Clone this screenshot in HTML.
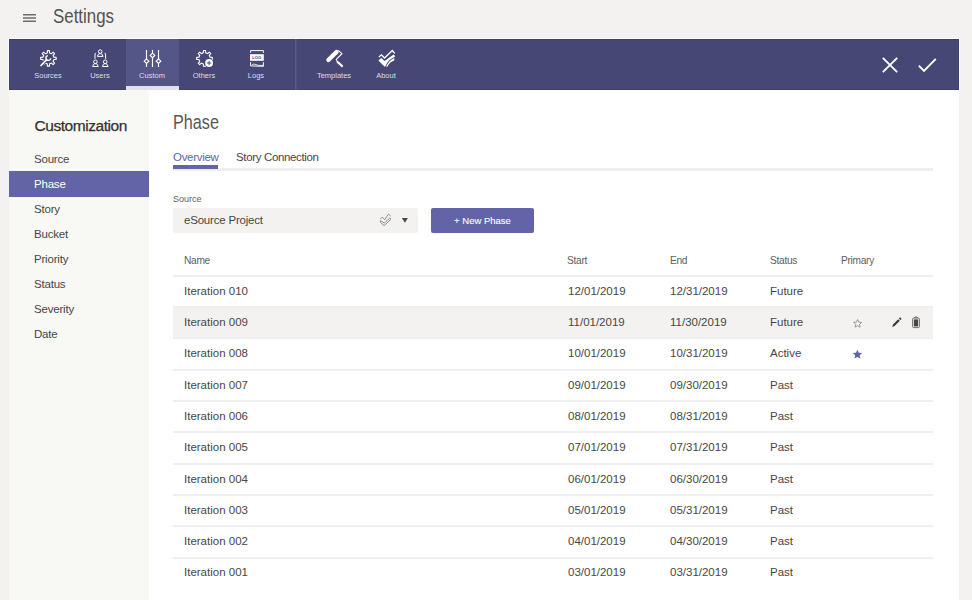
<!DOCTYPE html>
<html><head><meta charset="utf-8">
<style>
*{margin:0;padding:0;box-sizing:border-box}
html,body{width:972px;height:600px;overflow:hidden;background:#f3f2f1;font-family:"Liberation Sans",sans-serif;position:relative}
.a{position:absolute;white-space:nowrap}
.tb{left:9px;top:39px;width:950px;height:51px;background:#464775;box-shadow:0 -1px 0 0 #fafaf8,-1px 0 0 0 #fafaf8,1px 0 0 0 #fafaf8,inset 0 0 0 1px #404172}
.act{left:126px;top:39px;width:53px;height:51px;background:#555688}
.actbar{left:126px;top:86px;width:53px;height:4px;background:#e1e1e6}
.sep{left:295px;top:39px;width:2px;height:51px;background:linear-gradient(90deg,#585a82 50%,#4f5081 50%)}
.lbl{font-size:7.5px;color:#dcdcf0;top:71px;text-align:center;width:52px}
.side{left:9px;top:90px;width:140px;height:510px;background:#f8f8f5}
.main{left:149px;top:90px;width:810px;height:510px;background:#fff}
.si{left:34px;font-size:11.5px;color:#484644;margin-top:-0.5px;letter-spacing:-0.2px}
.hd{font-size:10.2px;color:#605e5c;letter-spacing:-0.3px}
.td{font-size:11.5px;color:#484644}
.hr{left:173px;width:760px;height:1px;background:#f0efee}
</style></head><body>
<!-- hamburger -->
<svg class="a" style="left:20px;top:10px" width="20" height="16" viewBox="0 0 20 16"><path d="M3,4.7 H16 M3,8 H16 M3,11.2 H16" stroke="#6e6d6c" stroke-width="1.6"/></svg>
<div class="a" style="left:53px;top:4.8px;font-size:19.5px;color:#55534f;transform:scaleX(0.865);transform-origin:0 0">Settings</div>

<div class="a tb"></div>
<div class="a act"></div>
<div class="a actbar"></div>
<div class="a sep"></div>
<svg class="a" style="left:36px;top:46px" width="24" height="24" viewBox="0 0 24 24" fill="none" stroke="#ffffff">
<path d="M11.25,6.92 L11.37,4.67 L13.43,4.67 L13.55,6.92 L15.47,7.71 L17.14,6.21 L18.59,7.66 L17.09,9.33 L17.88,11.25 L20.13,11.37 L20.13,13.43 L17.88,13.55 L17.09,15.47 L18.59,17.14 L17.14,18.59 L15.47,17.09 L13.55,17.88 L13.43,20.13 L11.37,20.13 L11.25,17.88 L9.33,17.09 L7.66,18.59 L6.21,17.14 L7.71,15.47 L6.92,13.55 L4.67,13.43 L4.67,11.37 L6.92,11.25 L7.71,9.33 L6.21,7.66 L7.66,6.21 L9.33,7.71Z" stroke-width="1.1" stroke-linejoin="round"/>
<path d="M5,19.5 L10.4,13.8" stroke="#464775" stroke-width="3.4" stroke-linecap="round"/>
<path d="M5,19.5 L10.4,13.8" stroke-width="1.7" stroke-linecap="round"/>
<path d="M11.9,9.6 A2.4,2.4 0 1 0 14.7,12.2" stroke-width="1.4"/>
</svg>
<svg class="a" style="left:88px;top:46px" width="24" height="24" viewBox="0 0 24 24" fill="none" stroke="#ffffff" stroke-width="1">
<circle cx="12.2" cy="5.6" r="1.8"/><path d="M9.4,10.4 L10.4,8.2 Q10.8,7.6 12.2,7.6 Q13.6,7.6 14,8.2 L15.1,10.4 Z"/>
<circle cx="7.4" cy="15.8" r="1.8"/><path d="M4.6,20.5 L5.6,18.3 Q6,17.7 7.4,17.7 Q8.8,17.7 9.2,18.3 L10.3,20.5 Z"/>
<circle cx="17.2" cy="15.8" r="1.8"/><path d="M14.4,20.5 L15.4,18.3 Q15.8,17.7 17.2,17.7 Q18.6,17.7 19,18.3 L20.1,20.5 Z"/>
<path d="M7,12.8 V7.8 Q7,7.3 8,7.3"/><path d="M17.6,12.8 V7.8 Q17.6,7.3 16.6,7.3"/>
</svg>
<svg class="a" style="left:140px;top:46px" width="24" height="24" viewBox="0 0 24 24" fill="none" stroke="#ffffff" stroke-width="1.15">
<path d="M6.5,4 V12.9 M6.5,17.5 V21 M12.5,4 V7.1 M12.5,11.7 V21 M18.5,4 V12.9 M18.5,17.5 V21"/>
<path d="M6.5,12.9 L8.8,15.2 L6.5,17.5 L4.2,15.2Z M12.5,7.1 L14.8,9.4 L12.5,11.7 L10.2,9.4Z M18.5,12.9 L20.8,15.2 L18.5,17.5 L16.2,15.2Z"/>
</svg>
<svg class="a" style="left:192px;top:46px" width="24" height="24" viewBox="0 0 24 24" fill="none" stroke="#ffffff">
<path d="M11.33,6.82 L11.46,4.57 L13.54,4.57 L13.67,6.82 L15.62,7.63 L17.30,6.13 L18.77,7.60 L17.27,9.28 L18.08,11.23 L20.33,11.36 L20.33,13.44 L18.08,13.57 L17.27,15.52 L18.77,17.20 L17.30,18.67 L15.62,17.17 L13.67,17.98 L13.54,20.23 L11.46,20.23 L11.33,17.98 L9.38,17.17 L7.70,18.67 L6.23,17.20 L7.73,15.52 L6.92,13.57 L4.67,13.44 L4.67,11.36 L6.92,11.23 L7.73,9.28 L6.23,7.60 L7.70,6.13 L9.38,7.63Z" stroke-width="1.1" stroke-linejoin="round"/>
<circle cx="17.1" cy="17" r="4.7" fill="#464775" stroke="none"/>
<circle cx="17.1" cy="17" r="3.9" fill="#ffffff" stroke="none"/>
<path d="M17.1,14.8 V19.2 M14.9,17 H19.3" stroke="#464775" stroke-width="0.95"/>
</svg>
<svg class="a" style="left:244px;top:46px" width="24" height="24" viewBox="0 0 24 24" fill="none" stroke="#ffffff" stroke-width="1">
<path d="M6.6,6.8 V4.6 H19.4 V6.8"/>
<rect x="6" y="8.2" width="13.8" height="6.6" fill="#ffffff" stroke="none"/>
<text x="12.8" y="13.2" font-family="Liberation Sans" font-size="4.2" font-weight="bold" fill="#464775" stroke="none" text-anchor="middle">LOG</text>
<path d="M6.6,16.2 V19.9 L19.4,20.3 V16.2"/>
<path d="M8,18.6 Q10,17.4 12,18.6 T19,19.4" stroke-width="0.8"/>
</svg>
<svg class="a" style="left:322px;top:46px" width="24" height="24" viewBox="0 0 24 24" fill="none" stroke="#ffffff">
<path d="M6.4,14.0 L14.5,5.9" stroke-width="4.2" stroke-linecap="round"/>
<path d="M16.3,4.4 L19.9,7.7 L14.3,13.3 L14.8,15" stroke-width="1.1" stroke-linejoin="miter"/>
<path d="M15.6,16 L20,20" stroke-width="2.3" stroke-linecap="round"/>
</svg>
<svg class="a" style="left:374px;top:46px" width="24" height="24" viewBox="0 0 24 24" fill="none" stroke="#ffffff">
<path d="M4.8,11.1 L7.5,8.8 L10.5,12 L18.3,4.5 L20.7,7.4" stroke-width="1.3" stroke-linejoin="miter"/>
<path d="M4.4,14.4 L7.3,11.9 L10.6,15 L19.6,8.5 L21,9.9 L20.6,11 Q14.2,13.2 11.4,20.2 L10.7,20.8 Z" fill="#ffffff" stroke="none"/>
<path d="M12.2,20.7 Q14.6,14.6 20.4,12.1 L20.2,14.4 Q15.6,15.8 13.2,21 Z" fill="#ffffff" stroke="none"/>
</svg>
<svg class="a" style="left:878px;top:53px" width="24" height="24" viewBox="0 0 24 24"><path d="M4.8,4.8 L19.2,19.2 M19.2,4.8 L4.8,19.2" stroke="#fff" stroke-width="1.9"/></svg>
<svg class="a" style="left:915px;top:53px" width="24" height="24" viewBox="0 0 24 24"><path d="M3.8,12.6 L9,17.8 L20.8,5.8" fill="none" stroke="#fff" stroke-width="1.9"/></svg>
<div class="a lbl" style="left:22px">Sources</div>
<div class="a lbl" style="left:74px">Users</div>
<div class="a lbl" style="left:126px">Custom</div>
<div class="a lbl" style="left:178px">Others</div>
<div class="a lbl" style="left:230px">Logs</div>
<div class="a lbl" style="left:308px">Templates</div>
<div class="a lbl" style="left:360px">About</div>

<div class="a side"></div>
<div class="a main"></div>
<div class="a" style="left:9px;top:171px;width:140px;height:26px;background:#6264a7"></div>
<div class="a" style="left:34.5px;top:116.5px;font-size:15.5px;color:#323130;-webkit-text-stroke:0.25px #323130;letter-spacing:-0.45px">Customization</div>
<div class="a si" style="top:153px">Source</div>
<div class="a si" style="top:178px;color:#fff">Phase</div>
<div class="a si" style="top:203px">Story</div>
<div class="a si" style="top:228px">Bucket</div>
<div class="a si" style="top:253px">Priority</div>
<div class="a si" style="top:278px">Status</div>
<div class="a si" style="top:303px">Severity</div>
<div class="a si" style="top:328px">Date</div>

<div class="a" style="left:173px;top:109.7px;font-size:20.5px;color:#5a5855;transform:scaleX(0.79);transform-origin:0 0">Phase</div>
<div class="a" style="left:173px;top:151px;font-size:11.5px;color:#6264a7;letter-spacing:-0.3px">Overview</div>
<div class="a" style="left:236px;top:151px;font-size:11.5px;color:#484644;letter-spacing:-0.35px">Story Connection</div>
<div class="a hr" style="top:168px;height:3px;background:#efeeec"></div>
<div class="a" style="left:173px;top:165px;width:45px;height:4px;background:#6264a7"></div>

<div class="a" style="left:173px;top:193.7px;font-size:9px;color:#605e5c">Source</div>
<div class="a" style="left:173px;top:208px;width:245px;height:25px;background:#f3f2f1;border-radius:2px"></div>
<div class="a" style="left:184px;top:214px;font-size:11.5px;color:#484644;letter-spacing:-0.2px">eSource Project</div>
<svg class="a" style="left:378px;top:212px" width="15" height="15" viewBox="0 0 15 15"><path d="M2.3,7.1 L4.3,5.1 L6.7,7.7 L10.5,2.1 L12.8,4.2" fill="none" stroke="#8a8886" stroke-width="0.95"/><path d="M2.5,8.6 L6.3,11 L11.8,6 L13,7.2 L6.1,13.7 L2.3,10.3 Z" fill="none" stroke="#8a8886" stroke-width="0.95" stroke-linejoin="miter"/></svg>
<svg class="a" style="left:400px;top:216px" width="10" height="8" viewBox="0 0 10 8"><path d="M1.9,2.1 L7.9,2.1 L4.9,6.7Z" fill="#484644"/></svg>
<div class="a" style="left:431px;top:208px;width:103px;height:25px;background:#6264a7;border-radius:2px"></div>
<div class="a" style="left:431px;top:215px;width:103px;text-align:center;font-size:9.5px;color:#fff;-webkit-text-stroke:0.1px #fff">+ New Phase</div>

<div class="a hd" style="left:184px;top:255px">Name</div>
<div class="a hd" style="left:567px;top:255px">Start</div>
<div class="a hd" style="left:670px;top:255px">End</div>
<div class="a hd" style="left:770px;top:255px">Status</div>
<div class="a hd" style="left:841px;top:255px">Primary</div>
<div class="a hr" style="top:275px;height:2px"></div>
<div class="a td" style="left:184px;top:285px">Iteration 010</div>
<div class="a td" style="left:568px;top:285px">12/01/2019</div>
<div class="a td" style="left:670px;top:285px">12/31/2019</div>
<div class="a td" style="left:770px;top:285px">Future</div>
<div class="a" style="left:173px;top:306px;width:760px;height:33px;background:#f3f2f1"></div>
<div class="a hr" style="top:306px;height:2px"></div>
<div class="a td" style="left:184px;top:316px">Iteration 009</div>
<div class="a td" style="left:568px;top:316px">11/01/2019</div>
<div class="a td" style="left:670px;top:316px">11/30/2019</div>
<div class="a td" style="left:770px;top:316px">Future</div>
<div class="a hr" style="top:337px;height:2px"></div>
<div class="a td" style="left:184px;top:347px">Iteration 008</div>
<div class="a td" style="left:568px;top:347px">10/01/2019</div>
<div class="a td" style="left:670px;top:347px">10/31/2019</div>
<div class="a td" style="left:770px;top:347px">Active</div>
<div class="a hr" style="top:369px;height:2px"></div>
<div class="a td" style="left:184px;top:379px">Iteration 007</div>
<div class="a td" style="left:568px;top:379px">09/01/2019</div>
<div class="a td" style="left:670px;top:379px">09/30/2019</div>
<div class="a td" style="left:770px;top:379px">Past</div>
<div class="a hr" style="top:400px;height:2px"></div>
<div class="a td" style="left:184px;top:410px">Iteration 006</div>
<div class="a td" style="left:568px;top:410px">08/01/2019</div>
<div class="a td" style="left:670px;top:410px">08/31/2019</div>
<div class="a td" style="left:770px;top:410px">Past</div>
<div class="a hr" style="top:431px;height:2px"></div>
<div class="a td" style="left:184px;top:441px">Iteration 005</div>
<div class="a td" style="left:568px;top:441px">07/01/2019</div>
<div class="a td" style="left:670px;top:441px">07/31/2019</div>
<div class="a td" style="left:770px;top:441px">Past</div>
<div class="a hr" style="top:463px;height:2px"></div>
<div class="a td" style="left:184px;top:473px">Iteration 004</div>
<div class="a td" style="left:568px;top:473px">06/01/2019</div>
<div class="a td" style="left:670px;top:473px">06/30/2019</div>
<div class="a td" style="left:770px;top:473px">Past</div>
<div class="a hr" style="top:494px;height:2px"></div>
<div class="a td" style="left:184px;top:504px">Iteration 003</div>
<div class="a td" style="left:568px;top:504px">05/01/2019</div>
<div class="a td" style="left:670px;top:504px">05/31/2019</div>
<div class="a td" style="left:770px;top:504px">Past</div>
<div class="a hr" style="top:525px;height:2px"></div>
<div class="a td" style="left:184px;top:535px">Iteration 002</div>
<div class="a td" style="left:568px;top:535px">04/01/2019</div>
<div class="a td" style="left:670px;top:535px">04/30/2019</div>
<div class="a td" style="left:770px;top:535px">Past</div>
<div class="a hr" style="top:557px;height:2px"></div>
<div class="a td" style="left:184px;top:566px">Iteration 001</div>
<div class="a td" style="left:568px;top:566px">03/01/2019</div>
<div class="a td" style="left:670px;top:566px">03/31/2019</div>
<div class="a td" style="left:770px;top:566px">Past</div>
<svg class="a" style="left:852.5px;top:318.6px" width="9.2" height="9.2" viewBox="0 0 10 10"><path d="M5,0.6 L6.3,3.4 L9.4,3.7 L7.1,5.8 L7.7,8.9 L5,7.3 L2.3,8.9 L2.9,5.8 L0.6,3.7 L3.7,3.4Z" fill="none" stroke="#8a8886" stroke-width="0.9" stroke-linejoin="round"/></svg>
<svg class="a" style="left:851.6px;top:349.3px" width="10.8" height="10.8" viewBox="0 0 10 10"><path d="M5,0.6 L6.3,3.4 L9.4,3.7 L7.1,5.8 L7.7,8.9 L5,7.3 L2.3,8.9 L2.9,5.8 L0.6,3.7 L3.7,3.4Z" fill="#6264a7"/></svg>
<svg class="a" style="left:891px;top:317px" width="12" height="12" viewBox="0 0 12 12"><path d="M1.2,9.9 L2.0,7.4 L7.2,2.2 L8.8,3.8 L3.6,9.0 Z M7.9,1.5 L9.1,0.3 L10.7,1.9 L9.5,3.1 Z" fill="#3b3a39"/></svg>
<svg class="a" style="left:911px;top:316px" width="10" height="13" viewBox="0 0 10 13"><path d="M3.5,2 Q3.6,0.9 5,0.9 Q6.4,0.9 6.5,2" fill="none" stroke="#605e5c" stroke-width="0.9"/><rect x="1.6" y="2" width="6.8" height="9.6" rx="1.2" fill="none" stroke="#605e5c" stroke-width="0.9"/><rect x="2.9" y="3.4" width="4.2" height="7" fill="#484644"/></svg>
</body></html>
